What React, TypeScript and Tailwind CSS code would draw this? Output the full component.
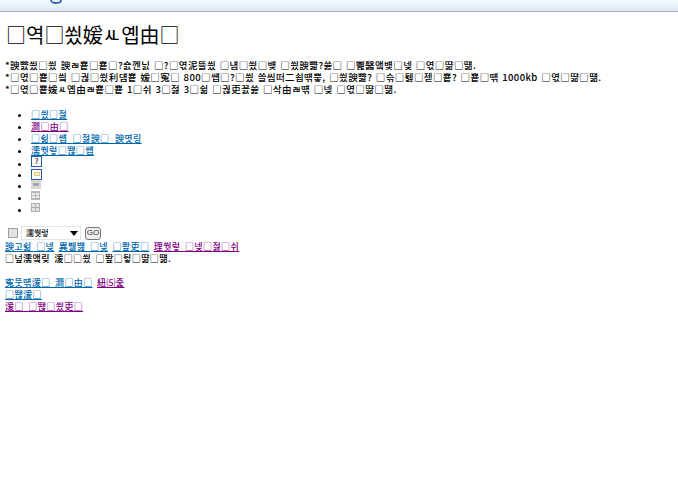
const blue = "text-[#0066aa] underline";
const purple = "text-[#800080] underline";
const lines = [
  "*諛뺤씠□쑀 諛ㄼ뿉□뿉□?숈껜닔 □?□엯泥뜰씠 □냼□쑀□뱾 □쑀諛뺣?쓣□ □뼱醫앸뱾□넺 □엯□땲□떎.",
  "*□엯□뿉□씤 □궎□쑀利덈뿉 媛□寃□ 800□썝□?□씠 쓸씸떠二쇱떆뿧, □쑀諛뺣? □슦□뒗□젣□뿉? □뿉□떆 1000kb □엯□땲□떎.",
  "*□엯□뿉媛ㅻ옙由ㄼ뿉□뿉 1□쉬 3□젏 3□쉶 □궎吏꾨쓣 □삭由ㄼ떆 □넺 □엯□땲□떎.",
];

export default function App() {
  return (
    <div className="min-h-[486px] bg-white text-[10px] leading-[12px] text-black" style={{ fontFamily: '"Noto Sans CJK KR", "Liberation Sans", sans-serif' }}>
      <div className="relative h-3 border-b border-[#a8b2c2] bg-gradient-to-b from-[#f6fafe] to-[#dce7f4]">
        <svg className="absolute left-[49px] top-0" width="14" height="4" viewBox="0 0 14 4">
          <path d="M2 0 C2 2 5 3 7 3 C10 3 12 2 12 0" fill="none" stroke="#3f6fb0" strokeWidth="2" />
        </svg>
      </div>

      <h1 className="ml-[6px] mt-[11px] whitespace-nowrap text-[20px] font-normal leading-[24px]">□역□쑀媛ㅻ옙由□</h1>

      <div className="ml-[5px] mt-[12px] whitespace-nowrap text-[9.5px] font-medium tracking-[0.4px] [word-spacing:1px]">
        {lines.map((line) => (
          <p key={line} className="h-3 overflow-hidden">{line}</p>
        ))}
      </div>

      <ul className="ml-[31px] mt-[14px] list-disc whitespace-nowrap text-[9px] font-medium tracking-[0.4px] [word-spacing:3px]">
        <li><a href="#" className={blue}>□씠□젏</a></li>
        <li><a href="#" className={purple}>澗□由□</a></li>
        <li><a href="#" className={blue}>□쉶□썝 □젏諛□ 諛몃링</a></li>
        <li><a href="#" className={blue}>濡쒓렇□뙎□썝</a></li>
        <li className="h-[12px] pt-px">
          <span className="flex h-[11px] w-[11px] -translate-y-[3px] items-center justify-center border border-[#1f5fa8] bg-white text-[8px] font-bold leading-none tracking-normal text-[#555]">?</span>
        </li>
        <li className="h-[11px]">
          <span className="flex h-[11px] w-[11px] -translate-y-[2px] items-center justify-center border border-[#1f5fa8] bg-white">
            <span className="h-[4px] w-[6px] border border-[#e3c67f] bg-[#f7ecd0]" />
          </span>
        </li>
        <li className="h-[12px] pt-px">
          <svg className="block -translate-y-[1px]" width="10" height="9"><rect width="10" height="9" fill="#d8d8d8" /><rect x="2" y="3" width="6" height="3" fill="#a8a8a8" /></svg>
        </li>
        <li className="h-[11px]">
          <svg className="block -translate-y-[1px]" width="9" height="9"><rect width="9" height="9" fill="#b8b8b8" /><rect x="1" y="2" width="3" height="2" fill="#eee" /><rect x="5" y="2" width="3" height="2" fill="#eee" /><rect x="1" y="5" width="3" height="2" fill="#eee" /><rect x="5" y="5" width="3" height="2" fill="#eee" /></svg>
        </li>
        <li className="h-[12px]">
          <svg className="block -translate-y-[1px]" width="9" height="9"><rect width="9" height="9" fill="#b0b0b0" /><rect x="1" y="1" width="3" height="3" fill="#e4e4e4" /><rect x="5" y="1" width="3" height="3" fill="#e4e4e4" /><rect x="1" y="5" width="3" height="3" fill="#e4e4e4" /><rect x="5" y="5" width="3" height="3" fill="#e4e4e4" /></svg>
        </li>
      </ul>

      <div className="ml-[8px] mt-[10px] flex h-[14px] items-center">
        <span className="h-[10px] w-[10px] border border-[#a0a0a0] bg-[#e2e2e2]" />
        <span className="relative ml-[3px] flex h-[14px] w-[60px] items-center border border-[#e4e4e4] bg-white pl-[4px] text-[8px] font-medium">
          濡쒓렇
          <span className="absolute right-[2px] top-[4px] h-0 w-0 border-x-[4px] border-t-[5px] border-x-transparent border-t-black" />
        </span>
        <span className="ml-[4px] flex h-[13px] w-[16px] items-center justify-center rounded-[3px] border border-[#777] bg-[#eeeeee] text-[8px] leading-none text-[#333]" style={{ fontFamily: '"Liberation Sans", sans-serif' }}>GO</span>
      </div>

      <div className="ml-[5px] whitespace-nowrap text-[9px] font-medium tracking-[0.4px] [word-spacing:2px]">
        <div className="mt-[1px]">
          <a href="#" className={blue}>諛고쉶 □넺</a> <a href="#" className={blue}>異뷀뱶 □넺</a> <a href="#" className={blue}>□쫲吏□</a> <a href="#" className={purple}>理쒓렇 □넺□젏□쉬</a>
        </div>
        <div>□넢濡앸맂 湲□□쑀 □뙆□뒿□땲□떎.</div>
        <div className="mt-[12px]"><a href="#" className={blue}>寃뚯떆湲□ 澗□由□</a> <a href="#" className={purple}>紐⑸줉</a></div>
        <div><a href="#" className={blue}>□뙎湲□</a></div>
        <div><a href="#" className={purple}>湲□ □뙎□쑀吏□</a></div>
      </div>
    </div>
  );
}
